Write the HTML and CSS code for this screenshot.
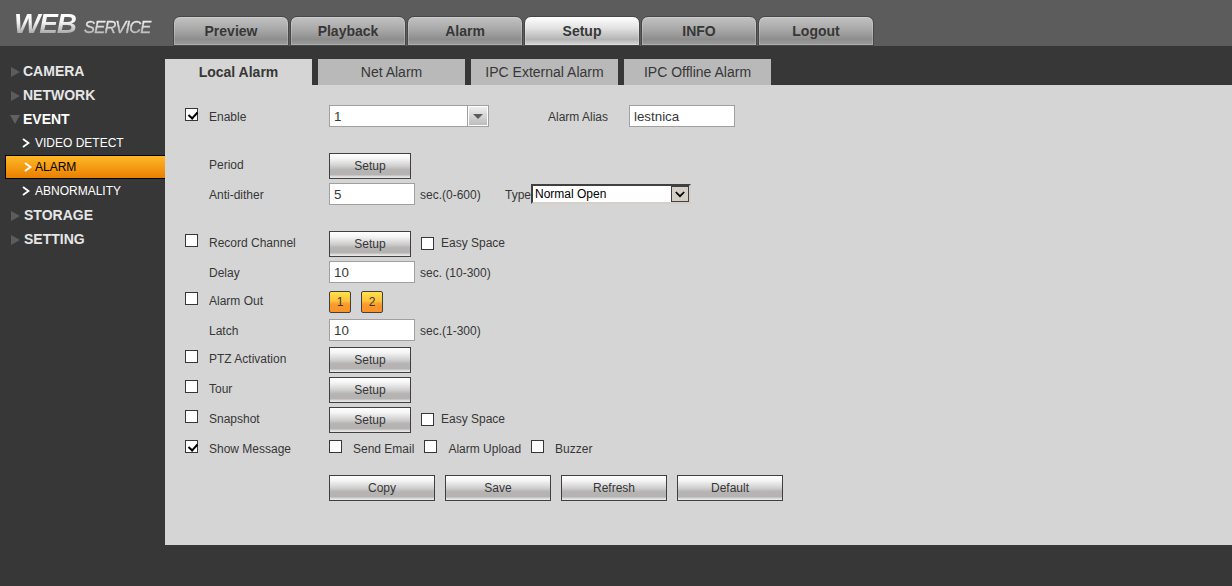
FILE: index.html
```html
<!DOCTYPE html>
<html lang="en">

<head>
    <meta charset="UTF-8">
    <meta name="viewport" content="width=device-width, initial-scale=1.0">
    <title>WEB SERVICE</title>
    <link rel="stylesheet" href="styles.css">
</head>

<body>

    <div class="header">
        <div class="logo"><span class="logo-web">WEB</span><span class="logo-service">SERVICE</span></div>
        <div class="nav">
            <a class="nav-tab">Preview</a>
            <a class="nav-tab">Playback</a>
            <a class="nav-tab">Alarm</a>
            <a class="nav-tab active">Setup</a>
            <a class="nav-tab">INFO</a>
            <a class="nav-tab">Logout</a>
        </div>
    </div>

    <div class="main">
        <div class="sidebar">
            <div class="menu"><span class="arrow"></span>CAMERA</div>
            <div class="menu"><span class="arrow"></span>NETWORK</div>
            <div class="menu open"><span class="arrow"></span>EVENT</div>
            <div class="submenu"><svg class="chevron" viewBox="0 0 8 10"><path d="M1 1 L6.5 5 L1 9"/></svg>VIDEO DETECT</div>
            <div class="submenu active"><svg class="chevron" viewBox="0 0 8 10"><path d="M1 1 L6.5 5 L1 9"/></svg>ALARM</div>
            <div class="submenu"><svg class="chevron" viewBox="0 0 8 10"><path d="M1 1 L6.5 5 L1 9"/></svg>ABNORMALITY</div>
            <div class="menu shift"><span class="arrow"></span>STORAGE</div>
            <div class="menu shift"><span class="arrow"></span>SETTING</div>
        </div>

        <div class="content">
            <div class="tabs">
                <a class="tab active">Local Alarm</a>
                <a class="tab">Net Alarm</a>
                <a class="tab">IPC External Alarm</a>
                <a class="tab">IPC Offline Alarm</a>
            </div>

            <div class="panel">
                <div class="row low">
                    <input type="checkbox" class="check" checked>
                    <label class="name">Enable</label>
                    <div class="combo">
                        <span class="combo-text">1</span>
                        <span class="combo-btn"></span>
                    </div>
                    <label class="alias">Alarm Alias</label>
                    <input type="text" class="text alias-text" value="lestnica">
                </div>
                <div class="row gap-big">
                    <label class="name">Period</label>
                    <button class="btn">Setup</button>
                </div>
                <div class="row low">
                    <label class="name">Anti-dither</label>
                    <input type="text" class="text" value="5">
                    <label class="unit">sec.(0-600)</label>
                    <label class="type">Type</label>
                    <div class="select">
                        <span class="select-text">Normal Open</span>
                        <span class="select-btn"><svg viewBox="0 0 10 7"><path d="M0.8 1 L5 5.2 L9.2 1"/></svg></span>
                    </div>
                </div>
                <div class="row gap-big">
                    <input type="checkbox" class="check">
                    <label class="name">Record Channel</label>
                    <button class="btn">Setup</button>
                    <input type="checkbox" class="check easy">
                    <label>Easy Space</label>
                </div>
                <div class="row low">
                    <label class="name">Delay</label>
                    <input type="text" class="text" value="10">
                    <label class="unit">sec. (10-300)</label>
                </div>
                <div class="row gap">
                    <input type="checkbox" class="check">
                    <label class="name">Alarm Out</label>
                    <button class="out">1</button>
                    <button class="out">2</button>
                </div>
                <div class="row low">
                    <label class="name">Latch</label>
                    <input type="text" class="text" value="10">
                    <label class="unit">sec.(1-300)</label>
                </div>
                <div class="row gap">
                    <input type="checkbox" class="check">
                    <label class="name">PTZ Activation</label>
                    <button class="btn">Setup</button>
                </div>
                <div class="row gap">
                    <input type="checkbox" class="check">
                    <label class="name">Tour</label>
                    <button class="btn">Setup</button>
                </div>
                <div class="row gap">
                    <input type="checkbox" class="check">
                    <label class="name">Snapshot</label>
                    <button class="btn">Setup</button>
                    <input type="checkbox" class="check easy">
                    <label>Easy Space</label>
                </div>
                <div class="row low">
                    <input type="checkbox" class="check" checked>
                    <label class="name">Show Message</label>
                    <input type="checkbox" class="check msg">
                    <label class="email">Send Email</label>
                    <input type="checkbox" class="check msg">
                    <label class="upload">Alarm Upload</label>
                    <input type="checkbox" class="check msg">
                    <label>Buzzer</label>
                </div>
                <div class="row actions">
                    <button class="btn wide">Copy</button>
                    <button class="btn wide">Save</button>
                    <button class="btn wide">Refresh</button>
                    <button class="btn wide">Default</button>
                </div>
            </div>
        </div>
    </div>

</body>

</html>
```

FILE: styles.css
```css
* {
    box-sizing: border-box;
}

body {
    margin: 0;
    height: 586px;
    overflow: hidden;
    background-color: #373737;
    font-family: "Liberation Sans", Arial, sans-serif;
    font-size: 12px;
    color: #373737;
}

.header {
    display: flex;
    height: 46px;
    background-color: #5c5c5c;
}

.logo {
    width: 173px;
    padding: 8px 0 0 14px;
    font-style: italic;
    font-weight: bold;
    line-height: 32px;
    white-space: nowrap;
    letter-spacing: -1.2px;
}

.logo span {
    color: transparent;
    -webkit-background-clip: text;
    background-clip: text;
}

.logo-web {
    display: inline-block;
    width: 70px;
    font-size: 28px;
    background-image: linear-gradient(#fff 20%, #f2f2f2 45%, #9c9c9c 85%);
}

.logo-service {
    display: inline-block;
    width: 76px;
    font-size: 16.5px;
    font-weight: normal;
    letter-spacing: -0.8px;
    -webkit-text-stroke: 0.4px transparent;
    background-image: linear-gradient(#eee 30%, #b0b0b0 80%);
}

.nav {
    display: flex;
    gap: 1px;
    padding-top: 16px;
}

.nav-tab {
    width: 116px;
    height: 30px;
    border: 1px solid #474747;
    border-radius: 7px 7px 0 0;
    background: linear-gradient(#c2c2c2, #a8a8a8 45%, #8d8d8d 80%, #9c9c9c);
    box-shadow: inset 0 0 0 1px rgba(255, 255, 255, 0.2);
    font-size: 14px;
    font-weight: bold;
    line-height: 28px;
    text-align: center;
}

.nav-tab.active {
    background: linear-gradient(#fff, #e2e2e2 40%, #b4b4b4 80%, #d8d8d8);
}

.main {
    display: flex;
    padding-top: 13px;
}

.sidebar {
    width: 165px;
    padding-left: 5px;
    color: #e6e6e6;
}

.menu {
    display: flex;
    align-items: center;
    height: 24px;
    padding-left: 6px;
    font-size: 14px;
    font-weight: bold;
}

.arrow {
    width: 12px;
    margin-top: 1px;
}

.arrow::before {
    content: "";
    display: block;
    width: 0;
    border-left: 9px solid #5c5c5c;
    border-top: 5.5px solid transparent;
    border-bottom: 5.5px solid transparent;
}

.menu.shift .arrow {
    width: 13px;
}

.menu.open {
    padding-left: 5px;
    color: #fff;
}

.menu.open .arrow {
    width: 13px;
}

.menu.open .arrow::before {
    border-top: 9px solid #606060;
    border-left: 5.5px solid transparent;
    border-right: 5.5px solid transparent;
    border-bottom: 0;
}

.submenu {
    display: flex;
    align-items: center;
    height: 24px;
    padding-left: 17px;
    color: #fff;
}

.submenu.active {
    border: 1px solid #000;
    border-right: 0;
    padding-left: 18px;
    background: linear-gradient(#fdb827, #f59c14 50%, #e87f00);
    color: #000;
}

.chevron {
    width: 8px;
    height: 10px;
    margin-right: 5px;
    fill: none;
    stroke: #fff;
    stroke-width: 1.9;
}

.submenu.active .chevron {
    margin-right: 3px;
}

.content {
    flex: 1;
}

.tabs {
    display: flex;
    gap: 6px;
}

.tab {
    width: 147px;
    height: 26px;
    background-color: #b9b9b9;
    font-size: 14px;
    line-height: 26px;
    text-align: center;
}

.tab.active {
    background-color: #d5d5d5;
    font-weight: bold;
}

.panel {
    height: 460px;
    padding: 17px 0 0 20px;
    background-color: #d5d5d5;
}

.row {
    display: flex;
    align-items: center;
    height: 28px;
}

.row.gap {
    margin-top: 2px;
}

.row.gap-big {
    margin-top: 22px;
}

.row label {
    line-height: 14px;
    margin-bottom: 2px;
    white-space: nowrap;
}

.row.low label {
    margin-bottom: 0;
    margin-top: 2px;
}

.name {
    width: 120px;
}

.name:first-child {
    margin-left: 24px;
}

.check {
    appearance: none;
    width: 13px;
    height: 13px;
    margin: 0 11px 7px 0;
    border: 1px solid #373737;
    background-color: #fff;
}

.row.low .check {
    margin-bottom: 3px;
}

/* tick mark */
.check:checked::before {
    content: "";
    display: block;
    width: 4px;
    height: 7px;
    margin: 1px 0 0 3.5px;
    border: solid #000;
    border-width: 0 2px 2px 0;
    transform: rotate(42deg);
}

.check.easy {
    margin: 0 7px 1px 10px;
}

.check.msg {
    margin-right: 11px;
}

.email,
.upload {
    margin-right: 10px;
}

.text {
    width: 86px;
    height: 22px;
    padding: 1px 4px;
    border: 1px solid #a0a0a0;
    background-color: #fff;
    color: #373737;
    font-family: inherit;
    font-size: 13.33px;
}

.alias {
    width: 81px;
    margin-left: 59px;
}

.alias-text {
    width: 106px;
}

.unit {
    width: 85px;
    margin-left: 5px;
}

.type {
    width: 26px;
}

.combo {
    display: flex;
    width: 160px;
    height: 22px;
    border: 1px solid #a0a0a0;
    background-color: #fff;
}

.combo-text {
    width: 138px;
    padding-left: 4px;
    border-right: 1px solid #a0a0a0;
    font-size: 13.33px;
    line-height: 21px;
}

.combo-btn {
    display: flex;
    align-items: center;
    justify-content: center;
    width: 18px;
    margin: 1px;
    background: linear-gradient(#eee, #bcbcbc);
}

.combo-btn::before {
    content: "";
    border-top: 5px solid #5a5a5a;
    border-left: 5px solid transparent;
    border-right: 5px solid transparent;
}

.select {
    display: flex;
    width: 160px;
    height: 20px;
    border: 2px solid #d4d0c8;
    border-top-color: #404040;
    border-left-color: #404040;
    background-color: #fff;
}

.select-text {
    flex: 1;
    padding-left: 2px;
    color: #000;
    line-height: 16px;
}

.select-btn {
    display: flex;
    align-items: center;
    justify-content: center;
    width: 18px;
    border: 1px solid #404040;
    background-color: #d4d0c8;
}

.select-btn svg {
    width: 10px;
    height: 7px;
    fill: none;
    stroke: #000;
    stroke-width: 1.7;
}

.btn {
    width: 82px;
    height: 26px;
    padding: 0 0 1px;
    border: 1px solid #404040;
    background: linear-gradient(#fff, #f4f4f4 20%, #d0cfcf 50%, #b7b4b4 65%, #b5b2b2 86%, #e6e6e6 96%);
    color: #373737;
    font-family: inherit;
    font-size: 12px;
}

.out {
    width: 22px;
    height: 22px;
    margin-right: 10px;
    padding: 0;
    border: 1px solid #404040;
    border-radius: 2px;
    background: linear-gradient(#ffe04a, #fdc23c 45%, #fb9c2c 60%, #fb9226);
    color: #373737;
    font-family: inherit;
    font-size: 12px;
}

.actions {
    gap: 10px;
    margin-top: 12px;
    padding-left: 144px;
}

.btn.wide {
    width: 106px;
}
```
